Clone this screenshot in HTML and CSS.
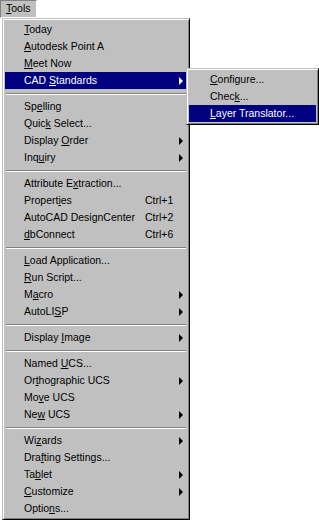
FILE: index.html
```html
<!DOCTYPE html>
<html lang="en">
<head>
  <meta charset="UTF-8" />
  <title>Tools menu</title>
  <link rel="stylesheet" href="styles.css">
</head>
<body>
  <div class="menubar">
    <span class="menu-title"><u>T</u>ools</span>
  </div>

  <div class="menu main-menu">
    <div class="item"><span class="label"><u>T</u>oday</span></div>
    <div class="item"><span class="label"><u>A</u>utodesk Point A</span></div>
    <div class="item"><span class="label"><u>M</u>eet Now</span></div>
    <div class="item active"><span class="label">CAD <u>S</u>tandards</span><span></span><span class="arrow"></span>
      <!-- open submenu -->
      <div class="menu submenu">
        <div class="item"><span class="label"><u>C</u>onfigure...</span></div>
        <div class="item"><span class="label">Chec<u>k</u>...</span></div>
        <div class="item active"><span class="label"><u>L</u>ayer Translator...</span></div>
      </div>
    </div>
    <div class="sep"></div>

    <div class="item"><span class="label">Sp<u>e</u>lling</span></div>
    <div class="item"><span class="label">Quic<u>k</u> Select...</span></div>
    <div class="item"><span class="label">Display <u>O</u>rder</span><span></span><span class="arrow"></span></div>
    <div class="item"><span class="label">Inq<u>u</u>iry</span><span></span><span class="arrow"></span></div>
    <div class="sep"></div>

    <div class="item"><span class="label">Attribute E<u>x</u>traction...</span></div>
    <div class="item"><span class="label">Propert<u>i</u>es</span><span class="key">Ctrl+1</span></div>
    <div class="item"><span class="label">AutoCAD DesignCenter</span><span class="key">Ctrl+2</span></div>
    <div class="item"><span class="label"><u>d</u>bConnect</span><span class="key">Ctrl+6</span></div>
    <div class="sep"></div>

    <div class="item"><span class="label"><u>L</u>oad Application...</span></div>
    <div class="item"><span class="label"><u>R</u>un Script...</span></div>
    <div class="item"><span class="label">M<u>a</u>cro</span><span></span><span class="arrow"></span></div>
    <div class="item"><span class="label">AutoLI<u>S</u>P</span><span></span><span class="arrow"></span></div>
    <div class="sep"></div>

    <div class="item"><span class="label">Display <u>I</u>mage</span><span></span><span class="arrow"></span></div>
    <div class="sep"></div>

    <div class="item"><span class="label">Named <u>U</u>CS...</span></div>
    <div class="item"><span class="label">Or<u>t</u>hographic UCS</span><span></span><span class="arrow"></span></div>
    <div class="item"><span class="label">Mo<u>v</u>e UCS</span></div>
    <div class="item"><span class="label">Ne<u>w</u> UCS</span><span></span><span class="arrow"></span></div>
    <div class="sep"></div>

    <div class="item"><span class="label">Wi<u>z</u>ards</span><span></span><span class="arrow"></span></div>
    <div class="item"><span class="label">Dra<u>f</u>ting Settings...</span></div>
    <div class="item"><span class="label">Ta<u>b</u>let</span><span></span><span class="arrow"></span></div>
    <div class="item"><span class="label"><u>C</u>ustomize</span><span></span><span class="arrow"></span></div>
    <div class="item"><span class="label">Optio<u>n</u>s...</span></div>
  </div>
</body>
</html>
```

FILE: styles.css
```css
body {
  margin: 0;
  background: #fff;
  font-family: "Liberation Sans", Arial, sans-serif;
  font-size: 10.5px;
  color: #000;
  overflow: hidden;
}
u {
  text-underline-offset: 1px;
}
.menubar {
  display: flex;
  height: 18px;
}
.menu-title {
  background: #c0c0c0;
  line-height: 15px;
  padding: 0 5px 0 5px;
  border: 1px solid;
  border-color: #808080 #fff #fff #808080;
}
.menu {
  background: #c0c0c0;
  border: 1px solid;
  border-color: #c0c0c0 #000 #000 #c0c0c0;
  box-shadow: inset 1px 1px #fff, inset -1px -1px #808080;
  padding: 2px;
  box-sizing: border-box;
}
.main-menu {
  width: 188px;
  margin-left: 2px;
}
.item {
  position: relative;
  display: grid;
  grid-template-columns: 140px 1fr 16px;
  align-items: center;
  height: 17px;
  line-height: 17px;
  white-space: nowrap;
}
.item .label {
  padding-left: 19px;
}
.item.active {
  background: #000080;
  color: #fff;
}
.arrow {
  width: 0;
  height: 0;
  margin-left: 8px;
  border-left: 4px solid #000;
  border-top: 4px solid transparent;
  border-bottom: 4px solid transparent;
}
.item.active > .arrow {
  border-left-color: #fff;
}
.sep {
  height: 0;
  margin: 4px 1px 3px;
  border-top: 1px solid #808080;
  border-bottom: 1px solid #fff;
}
.submenu {
  position: absolute;
  left: 181px;
  top: -4px;
  width: 133px;
  color: #000;
}
.submenu .item {
  grid-template-columns: 1fr;
}
.submenu .item .label {
  padding-left: 21px;
}
```
